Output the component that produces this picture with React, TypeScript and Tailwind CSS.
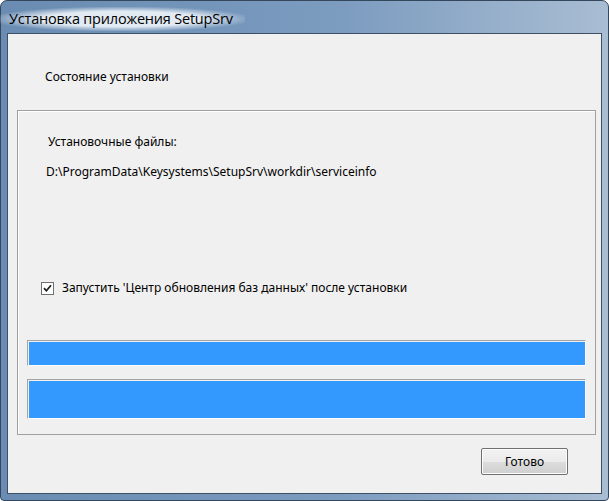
import React from "react";

function Check() {
  return (
    <svg width="9" height="9" viewBox="0 0 9 9" className="block">
      <path d="M1 4.2 L3.4 6.8 L8 1.2" fill="none" stroke="#1a1a1a" strokeWidth="1.7" />
    </svg>
  );
}

function Bar({ h }: { h: string }) {
  return (
    <div className={`border-t border-l border-[#a3a3a3] border-b border-r border-b-white border-r-white ${h} flex`}>
      <div className="flex-1 bg-[#3399ff] mt-[1px] ml-[1px]" />
    </div>
  );
}

export default function App() {
  return (
    <div className="w-[609px] h-[501px] bg-white font-['Noto_Sans',sans-serif]">
      <div className="w-[609px] h-[501px] rounded-t-[7px] rounded-b-[4px] border border-[#34475b] bg-[linear-gradient(90deg,#6a8cb2_0%,#7b9bbf_55%,#a9bdd3_100%)] flex flex-col">
        <div className="h-[32px] flex items-center shrink-0">
          <span className="ml-[-4px] mt-[3px] px-[12px] py-[2px] text-[14.5px] leading-[20px] text-black bg-[radial-gradient(ellipse_at_center,rgba(232,239,246,0.95)_45%,rgba(232,239,246,0)_75%)] font-['Open_Sans',sans-serif] tracking-[-0.2px]">
            Установка приложения SetupSrv
          </span>
        </div>
        <div className="mx-[6px] h-[461px] border border-[#3d5064] bg-[#f0f0f0] flex flex-col text-[12px] leading-[16px] text-black">
          <div className="pl-[37px] pt-[35px] h-[76px]">Состояние установки</div>
          <div className="ml-[9px] mr-[5px] h-[325px] border border-[#a0a0a0] shadow-[inset_1px_1px_0_#ffffff] flex flex-col px-[9px]">
            <div className="pl-[21px] pt-[23px]">Установочные файлы:</div>
            <div className="pl-[19px] pt-[14px]">D:\ProgramData\Keysystems\SetupSrv\workdir\serviceinfo</div>
            <div className="flex items-center pl-[14px] mt-[100px]">
              <div className="w-[13px] h-[13px] border border-[#707070] bg-white flex items-center justify-center">
                <Check />
              </div>
              <span className="ml-[8px]">Запустить 'Центр обновления баз данных' после установки</span>
            </div>
            <div className="mt-[44px]">
              <Bar h="h-[26px]" />
            </div>
            <div className="mt-[13px]">
              <Bar h="h-[40px]" />
            </div>
          </div>
          <div className="flex justify-end pr-[33px] pt-[13px]">
            <button className="w-[87px] h-[27px] border border-[#707070] bg-[linear-gradient(180deg,#f2f2f2_0%,#ebebeb_50%,#dddddd_51%,#cfcfcf_100%)] shadow-[inset_0_0_0_1px_#fcfcfc] rounded-[2px] text-[12px] text-black">
              Готово
            </button>
          </div>
        </div>
      </div>
    </div>
  );
}
